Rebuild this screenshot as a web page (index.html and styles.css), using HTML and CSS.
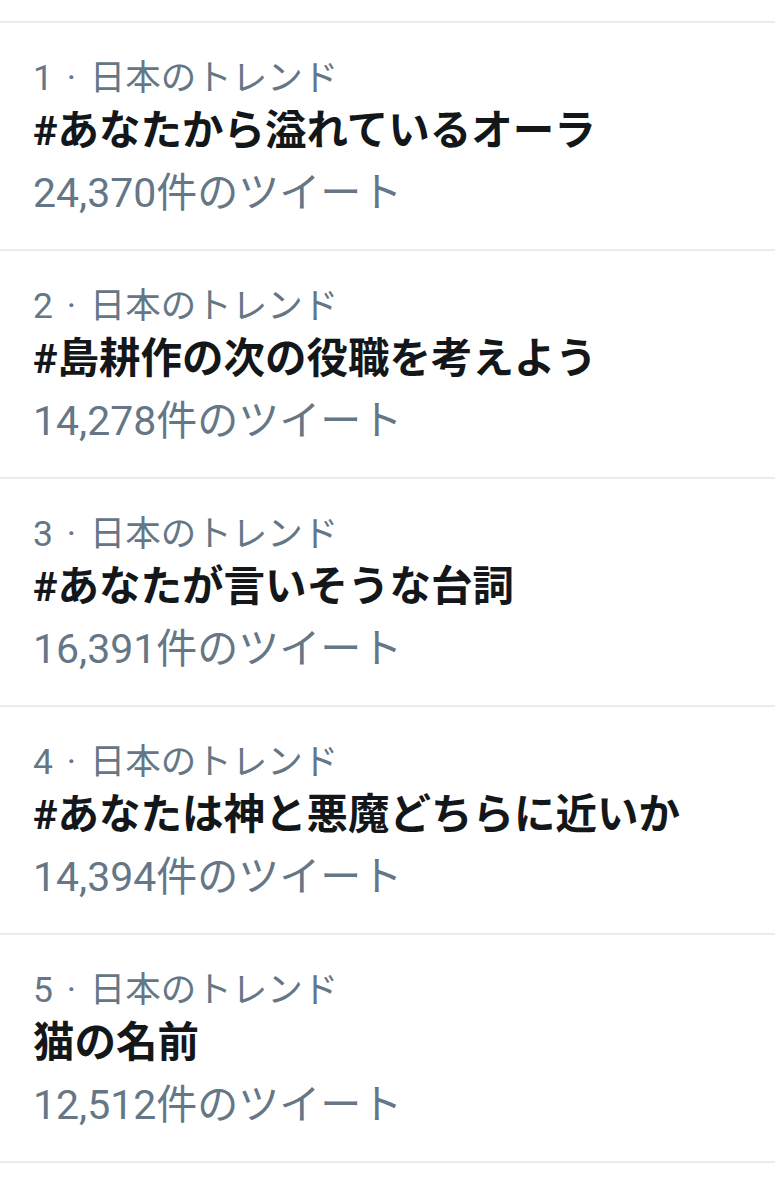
FILE: index.html
```html
<!DOCTYPE html>
<html lang="ja">
<head>
<meta charset="utf-8">
<link rel="stylesheet" href="styles.css">
</head>
<body>
<div class="list">
  <div class="item">
    <div class="meta">1 · 日本のトレンド</div>
    <div class="title">#あなたから溢れているオーラ</div>
    <div class="count">24,370件のツイート</div>
  </div>
  <div class="item">
    <div class="meta">2 · 日本のトレンド</div>
    <div class="title">#島耕作の次の役職を考えよう</div>
    <div class="count">14,278件のツイート</div>
  </div>
  <div class="item">
    <div class="meta">3 · 日本のトレンド</div>
    <div class="title">#あなたが言いそうな台詞</div>
    <div class="count">16,391件のツイート</div>
  </div>
  <div class="item">
    <div class="meta">4 · 日本のトレンド</div>
    <div class="title">#あなたは神と悪魔どちらに近いか</div>
    <div class="count">14,394件のツイート</div>
  </div>
  <div class="item">
    <div class="meta">5 · 日本のトレンド</div>
    <div class="title">猫の名前</div>
    <div class="count">12,512件のツイート</div>
  </div>
</div>
</body>
</html>
```
FILE: styles.css
```css
html, body {
  margin: 0;
  padding: 0;
  background: #ffffff;
}
body {
  font-family: Roboto, "Noto Sans CJK JP", sans-serif;
}
.list {
  padding-top: 21px;
}
.item {
  border-top: 2px solid #e6ecf0;
  height: 226px;
  padding-left: 33px;
  display: flex;
  flex-direction: column;
}
.item:last-child {
  border-bottom: 2px solid #e6ecf0;
}
.meta {
  color: #657786;
  font-size: 35.5px;
  line-height: 42px;
  margin-top: 34px;
  word-spacing: 5px;
}
.title {
  color: #14171a;
  font-size: 41.5px;
  font-weight: 700;
  line-height: 64px;
}
.count {
  color: #657786;
  font-size: 41px;
  line-height: 60px;
}
```
